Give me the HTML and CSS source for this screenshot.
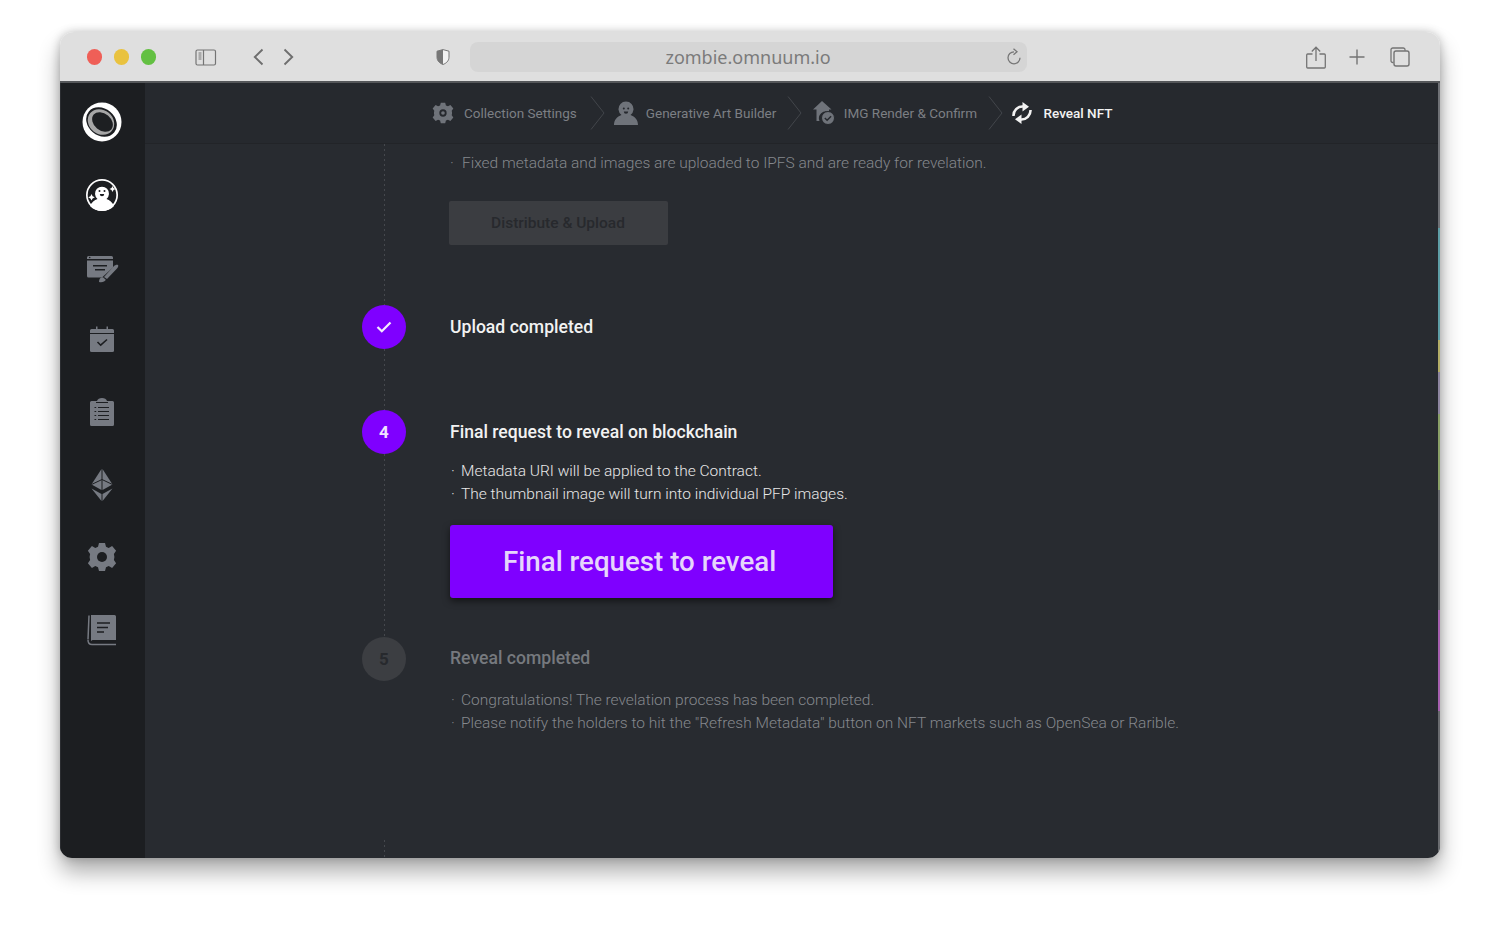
FILE: index.html
```html
<!DOCTYPE html>
<html lang="en">
<head>
<meta charset="utf-8">
<title>Reveal NFT</title>
<link rel="stylesheet" href="styles.css">
</head>
<body>
<div class="window">
  <header class="chrome">
    <div class="lights"><i class="light red"></i><i class="light yellow"></i><i class="light green"></i></div>
    <svg class="c-sidebar" width="22" height="17" viewBox="0 0 22 17"><rect x="1" y="1" width="19.5" height="15" rx="1.5" fill="none" stroke="#747474" stroke-width="1.2"/><path d="M8.5 1v15" stroke="#747474" stroke-width="1.2"/><path d="M3.5 4h3M3.5 6h3M3.5 8h3M3.5 10h3" stroke="#747474" stroke-width="1"/></svg>
    <svg class="c-back" width="11" height="18" viewBox="0 0 11 18"><path d="M9.5 1.5 1.8 9l7.7 7.5" fill="none" stroke="#6e6e6e" stroke-width="1.9"/></svg>
    <svg class="c-forward" width="11" height="18" viewBox="0 0 11 18"><path d="M1.5 1.5 9.2 9l-7.7 7.5" fill="none" stroke="#6e6e6e" stroke-width="1.9"/></svg>
    <svg class="c-shield" width="14" height="16" viewBox="0 0 14 16"><path d="M7 .6 13 2.2v6C13 12 10 14.400 7 15.500 4 14.400 1 12 1 8.200v-6Z" fill="#f2f2f2" stroke="#777" stroke-width="1"/><path d="M7 .6 1 2.200v6C1 12 4 14.400 7 15.500Z" fill="#777"/></svg>
    <div class="url"><span class="url-text">zombie.omnuum.io</span>
      <svg class="c-reload" width="16" height="18" viewBox="0 0 16 18"><path d="M8 3.800a6 6 0 1 0 6 6" fill="none" stroke="#777" stroke-width="1.300"/><path d="M7.500 .8 11 3.800 7.500 6.800" fill="none" stroke="#777" stroke-width="1.300"/></svg>
    </div>
    <svg class="c-share" width="20" height="23" viewBox="0 0 20 23"><path d="M6.500 8H1.700a1 1 0 0 0-1 1v12a1 1 0 0 0 1 1h16.600a1 1 0 0 0 1-1V9a1 1 0 0 0-1-1h-4.800" fill="none" stroke="#747474" stroke-width="1.300"/><path d="M10 15V1.500M5.800 5.500 10 1.200l4.200 4.300" fill="none" stroke="#747474" stroke-width="1.300"/></svg>
    <svg class="c-plus" width="16" height="16" viewBox="0 0 16 16"><path d="M8 .5v15M.5 8h15" stroke="#747474" stroke-width="1.400"/></svg>
    <svg class="c-tabs" width="20" height="20" viewBox="0 0 20 20"><path d="M3.500 15.500H2.800A1.800 1.800 0 0 1 1 13.700V2.800A1.800 1.800 0 0 1 2.800 1h10.400A1.800 1.800 0 0 1 15 2.800v1" fill="none" stroke="#747474" stroke-width="1.300"/><rect x="4" y="4" width="15" height="15" rx="2" fill="none" stroke="#747474" stroke-width="1.400"/></svg>
  </header>

  <div class="app">
    <nav class="rail">
      <div class="rail-item">
        <svg width="40" height="40" viewBox="0 0 40 40"><circle cx="20" cy="20" r="19.500" fill="#fff"/><ellipse cx="19.500" cy="20" rx="16.500" ry="13.500" transform="rotate(40 19.500 20)" fill="#1b1d20"/><ellipse cx="19" cy="20" rx="14" ry="12" transform="rotate(40 19 20)" fill="#a6a6a6"/><ellipse cx="20.500" cy="20" rx="11.500" ry="8.500" transform="rotate(40 20.500 20)" fill="#1d1f22"/></svg>
      </div>
      <div class="rail-item">
        <svg width="34" height="34" viewBox="0 0 34 34"><circle cx="17" cy="17" r="16" fill="#fff"/><circle cx="17" cy="17" r="14.300" fill="#1c1e21"/><path d="M5 28C8 31.500 12.500 33 17 33s9-1.500 12-5c-1.500-3.500-4.500-6-7.500-7a7 7 0 1 0-9 0C9.500 22 6.500 24.500 5 28Z" fill="#fff"/><circle cx="14.500" cy="13" r="1" fill="#1c1e21"/><circle cx="19.500" cy="13" r="1" fill="#1c1e21"/><path d="M14.800 16h4.400a2.200 2.200 0 0 1-4.400 0Z" fill="#1c1e21"/><path d="M6.500 16l1.100 2.200 2.200 1.100-2.200 1.100-1.100 2.200-1.100-2.200-2.200-1.100 2.200-1.100ZM27.500 8l1 2 2 1-2 1-1 2-1-2-2-1 2-1Z" fill="#fff"/></svg>
      </div>
      <div class="rail-item rail-low">
        <svg width="34" height="30" viewBox="0 0 34 30"><path d="M2 4.500A1.500 1.500 0 0 1 3.500 3h23A1.500 1.500 0 0 1 28 4.500V6H2Z" fill="#767a82"/><path d="M2 7.500h26v7L17 24.500H3.500A1.500 1.500 0 0 1 2 23Z" fill="#767a82"/><path d="M8 12h14v1.500H8ZM10 16h10v1.500H10Z" fill="#1c1e21"/><path d="M19 24l10-11c1-1 3-1.800 4-1 .8 1-.2 2.500-1 3.500L22 26ZM14 29c0-3 1.500-5 4-4.800l2.800 2.600C20 29 17 29.500 14 29Z" fill="#767a82"/><circle cx="4.700" cy="4.500" r=".8" fill="#1c1e21"/></svg>
      </div>
      <div class="rail-item rail-high">
        <svg width="28" height="28" viewBox="0 0 28 28"><path d="M2 5.500A1.500 1.500 0 0 1 3.500 4H8V1.500h1.500V4h9V1.500H20V4h4.500A1.500 1.500 0 0 1 26 5.500V8H2Z" fill="#767a82"/><path d="M2 9h24v16.500a1.500 1.500 0 0 1-1.500 1.500h-21A1.500 1.500 0 0 1 2 25.500Z" fill="#767a82"/><path d="m9.500 17 3.200 3.200L19 14.500" fill="none" stroke="#1c1e21" stroke-width="1.600"/></svg>
      </div>
      <div class="rail-item">
        <svg width="26" height="30" viewBox="0 0 26 30"><path d="M1 5.500A1.500 1.500 0 0 1 2.500 4H8c.5-2 2.500-3 5-3s4.500 1 5 3h5.500A1.500 1.500 0 0 1 25 5.500v22a1.500 1.500 0 0 1-1.500 1.500h-21A1.500 1.500 0 0 1 1 27.500Z" fill="#767a82"/><path d="M7 5.500h12" stroke="#1c1e21" stroke-width="1"/><path d="M9 10.500h11M9 14.500h11M9 18.500h11M9 22.500h11" stroke="#1c1e21" stroke-width="1.200"/><path d="M5.500 10.500h1.700M5.500 14.500h1.700M5.500 18.500h1.700M5.500 22.500h1.700" stroke="#1c1e21" stroke-width="1.200"/></svg>
      </div>
      <div class="rail-item">
        <svg width="24" height="34" viewBox="0 0 24 34"><path d="M11.500 1 1.500 16.500l10 5.500Z" fill="#767a82"/><path d="M12.500 1 22.500 16.500l-10 5.500Z" fill="#767a82"/><path d="M1.500 20.500 11.500 26V33ZM22.500 20.500 12.500 26V33Z" fill="#767a82"/><path d="M1.500 16.500 12 11.500l10.500 5" fill="none" stroke="#1c1e21" stroke-width="1"/></svg>
      </div>
      <div class="rail-item">
        <svg width="30" height="30" viewBox="0 0 30 30"><path d="M12 1h6l1 3.700 2.700 1.200 3.400-1.900 4 4.800-2.200 3.200.5 3-.5 3 2.200 3.200-4 4.800-3.400-1.900-2.700 1.200-1 3.700h-6l-1-3.700-2.700-1.200-3.400 1.900-4-4.800 2.200-3.200-.5-3 .5-3L.9 8.800l4-4.800 3.400 1.900L11 4.700Z" fill="#767a82"/><circle cx="15" cy="15" r="5" fill="#1c1e21"/></svg>
      </div>
      <div class="rail-item">
        <svg width="30" height="32" viewBox="0 0 30 32"><path d="M4 1h23.500A1.500 1.500 0 0 1 29 2.500V26H5.500L4 27Z" fill="#767a82"/><path d="M1 25.500C1 24 2 3 2 1.500M1 26c0 2.500 1.500 4.500 4 4.500h24" fill="none" stroke="#767a82" stroke-width="1.500"/><path d="M10 9h13M10 13.500h11M10 18h7" stroke="#1c1e21" stroke-width="1.500"/></svg>
      </div>
    </nav>

    <div class="main">
      <div class="steps-nav">
        <div class="crumb crumb-first">
          <svg width="22" height="22" viewBox="0 0 30 30"><path d="M12 1h6l1 3.700 2.700 1.200 3.400-1.900 4 4.800-2.200 3.200.5 3-.5 3 2.200 3.200-4 4.800-3.400-1.900-2.700 1.200-1 3.700h-6l-1-3.700-2.700-1.200-3.400 1.900-4-4.800 2.200-3.200-.5-3 .5-3L.9 8.800l4-4.800 3.400 1.900L11 4.700Z" fill="#6f737a"/><circle cx="15" cy="15" r="5" fill="#26292e"/><circle cx="15" cy="15" r="2.500" fill="#6f737a"/></svg>
          <span>Collection Settings</span>
        </div>
        <svg class="sep" width="15" height="34" viewBox="0 0 15 34"><path d="M1 .5 14 17 1 33.500" fill="none" stroke="#43464b" stroke-width="1"/></svg>
        <div class="crumb crumb-person">
          <svg width="24" height="24" viewBox="0 0 24 24"><path d="M0 24c0-5 3-8.500 7.500-10a7.500 7.500 0 1 1 9 0C21 15.500 24 19 24 24Z" fill="#6f737a"/><circle cx="9.800" cy="7.500" r="1" fill="#26292e"/><circle cx="14.200" cy="7.500" r="1" fill="#26292e"/><path d="M9.800 10.500h4.400a2.200 2.200 0 0 1-4.400 0Z" fill="#26292e"/></svg>
          <span>Generative Art Builder</span>
        </div>
        <svg class="sep" width="15" height="34" viewBox="0 0 15 34"><path d="M1 .5 14 17 1 33.500" fill="none" stroke="#43464b" stroke-width="1"/></svg>
        <div class="crumb crumb-img">
          <svg width="23" height="24" viewBox="0 0 23 24"><path d="M9 0 18.500 8.500H16V11a7 7 0 0 0-9.500 9H3.500V8.500H0Z" fill="#6f737a"/><circle cx="15" cy="17" r="6.500" fill="#6f737a" stroke="#26292e" stroke-width="1"/><path d="m11.800 17 2.300 2.300 4-4" fill="none" stroke="#26292e" stroke-width="1.400"/></svg>
          <span>IMG Render &amp; Confirm</span>
        </div>
        <svg class="sep" width="15" height="34" viewBox="0 0 15 34"><path d="M1 .5 14 17 1 33.500" fill="none" stroke="#43464b" stroke-width="1"/></svg>
        <div class="crumb crumb-on">
          <svg width="22" height="24" viewBox="0 0 22 24"><path d="M2.500 15A9 9 0 0 1 12 5.500M19.500 9A9 9 0 0 1 10 18.500" fill="none" stroke="#f2f2f2" stroke-width="2.600"/><path d="M11.500 1 18 5.800 11.500 10.500ZM10.500 23 4 18.200 10.500 13.500Z" fill="#f2f2f2"/></svg>
          <span>Reveal NFT</span>
        </div>
      </div>

      <div class="flow">
        <div class="thread"></div>
        <div class="thread-tail"></div>
        <p class="note note-top"><span class="dot">·</span>Fixed metadata and images are uploaded to IPFS and are ready for revelation.</p>
        <button class="btn-off" type="button">Distribute &amp; Upload</button>

        <section class="step step-done">
          <div class="disc"><svg width="16" height="12" viewBox="0 0 16 12"><path d="m1.500 6 4.300 4.300L14.500 1.500" fill="none" stroke="#f4ecff" stroke-width="2.200"/></svg></div>
          <h2 class="step-title">Upload completed</h2>
        </section>

        <section class="step step-now">
          <div class="disc">4</div>
          <div class="step-body">
            <h2 class="step-title">Final request to reveal on blockchain</h2>
            <ul class="notes">
              <li><span class="dot">·</span>Metadata URI will be applied to the Contract.</li>
              <li><span class="dot">·</span>The thumbnail image will turn into individual PFP images.</li>
            </ul>
            <button class="btn-go" type="button">Final request to reveal</button>
          </div>
        </section>

        <section class="step step-next">
          <div class="disc">5</div>
          <div class="step-body">
            <h2 class="step-title">Reveal completed</h2>
            <ul class="notes">
              <li><span class="dot">·</span>Congratulations! The revelation process has been completed.</li>
              <li><span class="dot">·</span>Please notify the holders to hit the "Refresh Metadata" button on NFT markets such as OpenSea or Rarible.</li>
            </ul>
          </div>
        </section>
      </div>
      <div class="edge"></div>
    </div>
  </div>
</div>
</body>
</html>
```
FILE: styles.css
```css
* { box-sizing: border-box; }
html, body { margin: 0; height: 100%; background: #fff; overflow: hidden; }
body { padding: 32px 60px 0; font-family: Roboto, "Liberation Sans", sans-serif; }

.window {
  height: 826px;
  display: flex;
  flex-direction: column;
  border-radius: 14px 14px 12px 12px;
  overflow: hidden;
  box-shadow: 0 14px 22px rgba(0,0,0,.32), 0 0 10px rgba(0,0,0,.22);
}

.chrome {
  height: 51px;
  flex: none;
  display: flex;
  align-items: center;
  padding-left: 26.500px;
  background: #dfdfdf;
  border-bottom: 2px solid #55575a;
}
.lights { display: flex; gap: 11.500px; margin-top: 1px; }
.light { width: 15.500px; height: 15.500px; border-radius: 50%; }
.red { background: #ef5f57; }
.yellow { background: #e9c23f; }
.green { background: #63c042; }
.chrome > svg { flex: none; margin-top: 1px; }
.chrome .c-sidebar { margin-left: 38.500px; }
.chrome .c-back { margin-left: 36px; }
.chrome .c-forward { margin-left: 19px; }
.chrome .c-shield { margin-left: 142px; }
.url {
  margin-left: 20px;
  width: 557px;
  height: 30px;
  border-radius: 8px;
  background: #d5d5d5;
  display: flex;
  align-items: center;
  justify-content: center;
  position: relative;
}
.url-text { font-family: "Noto Sans", Roboto, sans-serif; font-size: 18px; color: #7b7b7b; }
.c-reload { position: absolute; right: 5px; top: 6px; }
.chrome .c-share { margin-left: 279px; }
.chrome .c-plus { margin-left: 23px; }
.chrome .c-tabs { margin-left: 25px; }

.app { flex: 1; min-height: 0; display: flex; }

.rail {
  width: 85px;
  flex: none;
  padding-top: 3px;
  background: #1c1e21;
  border-left: 1px solid #2b2d31;
}
.rail-item { height: 72.500px; display: flex; align-items: center; justify-content: center; padding-right: 3px; }
.rail-low svg { margin-top: 2px; }
.rail-high svg { margin-bottom: 2px; }

.main { flex: 1; min-width: 0; background: #282b30; display: flex; flex-direction: column; position: relative; overflow: hidden; }
.steps-nav {
  height: 61px;
  flex: none;
  display: flex;
  align-items: center;
  padding-left: 287px;
  background: #26292e;
  border-bottom: 1px solid #222428;
  font-size: 13.500px;
  color: #7c7f84;
}
.crumb { display: flex; align-items: center; gap: 10px; }
.crumb span { white-space: nowrap; }
.crumb-first { padding-right: 2.500px; }
.crumb-person { gap: 8px; }
.crumb-img { gap: 8px; }
.crumb-on { color: #f2f2f2; font-weight: 500; gap: 11px; margin-left: -3px; }
.sep { margin: 0 11px 0 10.500px; flex: none; }
.crumb-first + .sep { margin-right: 9px; }

.flow { flex: 1; min-height: 0; padding: 9px 0 0 217px; position: relative; }
.thread, .thread-tail {
  position: absolute;
  left: 239px;
  width: 1px;
  background: repeating-linear-gradient(to bottom, #45484d 0, #45484d 2px, transparent 2px, transparent 5px);
}
.thread { top: 0; height: 493px; }
.thread-tail { bottom: 0; height: 18px; }
.dot { display: inline-block; width: 11px; margin-left: 1px; }
.note { margin: 0 0 0 87px; font-size: 15.500px; line-height: 20px; color: #85888d; font-weight: 300; }
.note-top .dot { width: 12px; }
.btn-off {
  display: block;
  margin: 28px 0 0 86.500px;
  width: 219px;
  height: 44px;
  border: 0;
  border-radius: 2px;
  background: #3b3d41;
  color: #27292d;
  font: 500 15.500px Roboto, sans-serif;
}

.step { display: flex; gap: 44px; position: relative; }
.disc {
  width: 44px;
  height: 44px;
  flex: none;
  border-radius: 50%;
  padding-bottom: 1px;
  background: #7f00ff;
  color: #f0e4ff;
  display: flex;
  align-items: center;
  justify-content: center;
  font-size: 17px;
  font-weight: 700;
}
.step-title { margin: 0; font-size: 17.600px; line-height: 24px; font-weight: 500; color: #f2f2f2; }
.step-done { margin-top: 60px; align-items: center; height: 44px; }
.step-now { margin-top: 61px; }
.step-now .step-title { margin-top: 10px; }
.step-now .notes { margin-top: 16px; }
.notes { list-style: none; margin: 16px 0 0; padding: 0; font-size: 15.500px; line-height: 23px; font-weight: 300; color: #e8e8e8; }
.notes .dot { width: 10px; }
.btn-go {
  display: block;
  margin-top: 19px;
  width: 383px;
  height: 73px;
  border: 0;
  border-radius: 3px;
  background: #7f00ff;
  color: #e6d5fb;
  font: 500 27.700px Roboto, sans-serif;
  text-align: left;
  padding-left: 53px;
  box-shadow: 0 3px 7px rgba(0,0,0,.55);
}
.step-next { margin-top: 39px; }
.step-next .disc { background: #3c3e42; color: #27292d; }
.step-next .step-title { margin-top: 9px; color: #76797e; }
.step-next .notes { color: #85888d; margin-top: 19px; }

.edge {
  position: absolute;
  top: 0;
  bottom: 0;
  right: 0;
  width: 2px;
  background: linear-gradient(to bottom,
    #6f7176 0, #6f7176 145px,
    #5f9ea6 145px, #5f9ea6 257px,
    #b4ae68 257px, #b4ae68 289px,
    #8e86a0 289px, #8e86a0 331px,
    #8aa068 331px, #8aa068 407px,
    #6a6c70 407px, #6a6c70 527px,
    #a760b0 527px, #a760b0 628px,
    #6a6c70 628px, #6a6c70 100%);
}
```
